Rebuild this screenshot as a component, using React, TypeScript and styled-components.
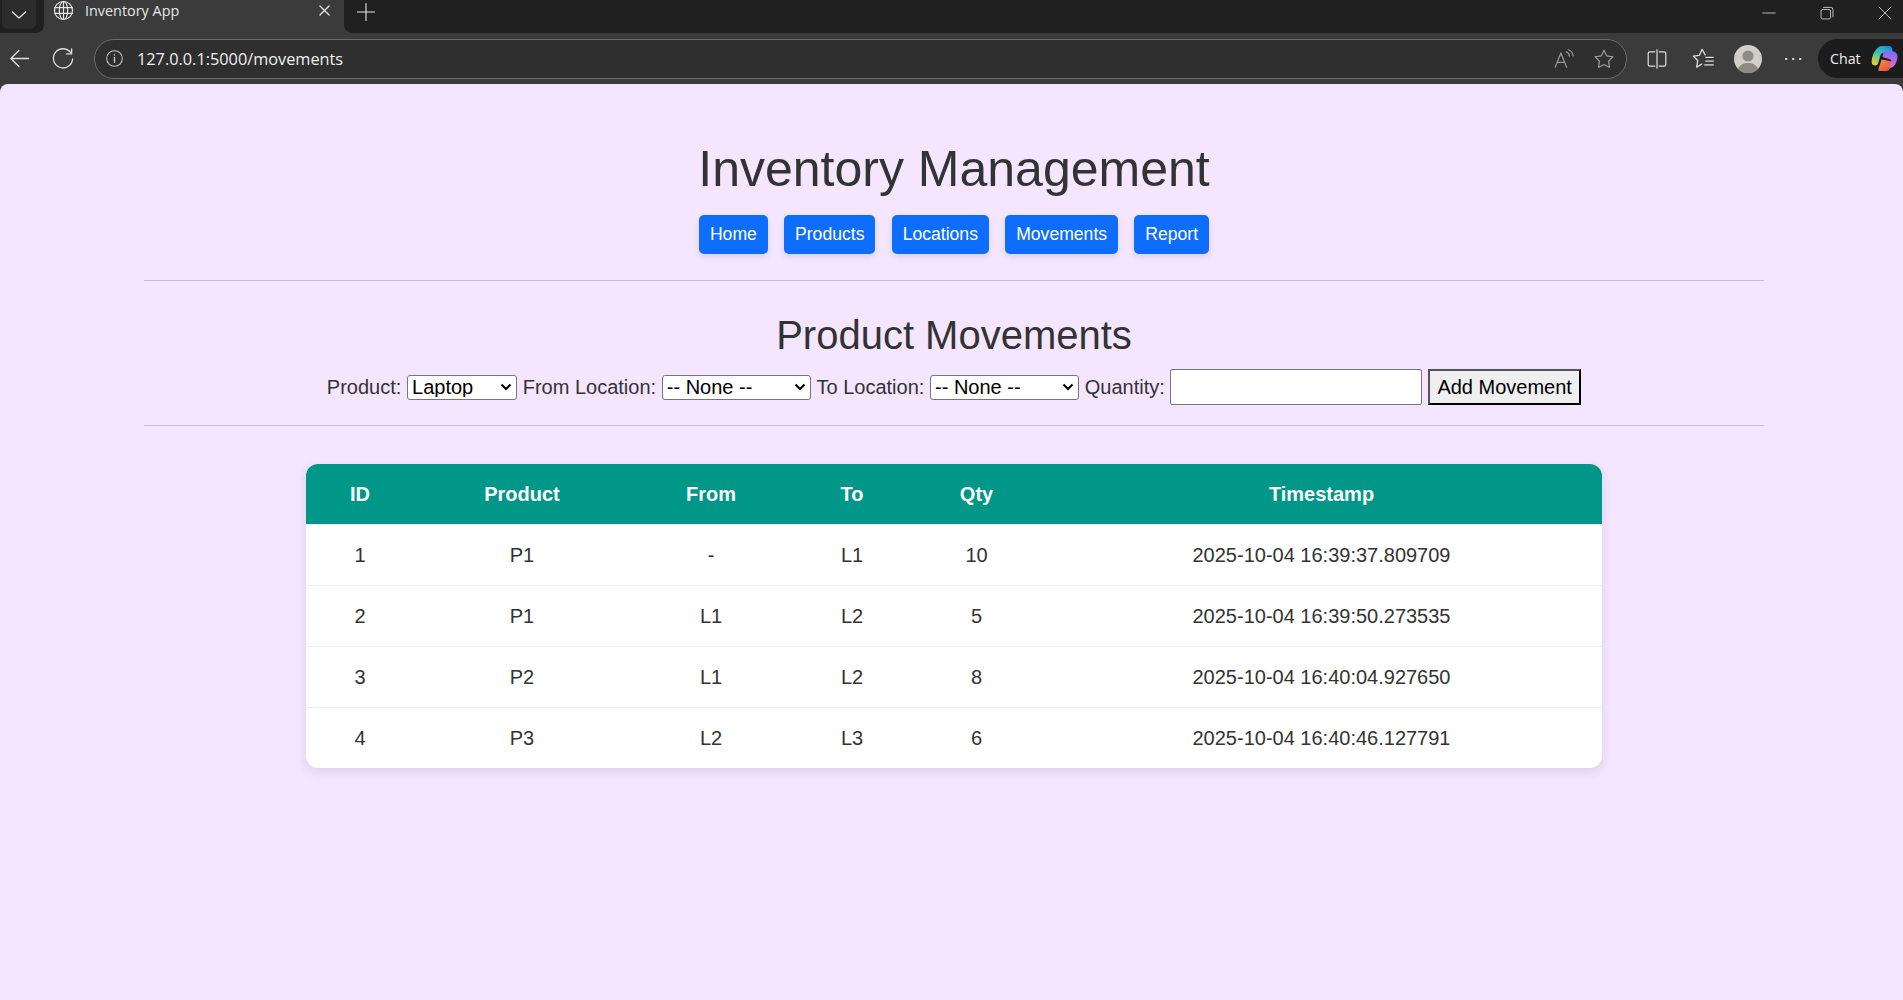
import { ReactNode } from "react";
import styled, { createGlobalStyle } from "styled-components";

const CHEVRON =
    "data:image/svg+xml,%3Csvg xmlns='http://www.w3.org/2000/svg' width='12' height='8' viewBox='0 0 12 8'%3E%3Cpath d='M1.5 1.5 6 6l4.5-4.5' fill='none' stroke='%23000' stroke-width='2'/%3E%3C/svg%3E";

const GlobalStyle = createGlobalStyle`
    html, body {
        margin: 0;
        padding: 0;
        background-color: #3b3b3b;
    }
    body {
        font-family: "Liberation Sans", Arial, sans-serif;
        color: #333;
    }
`;

const Window = styled.div`
    display: flex;
    flex-direction: column;
    height: 1000px;
    overflow: hidden;
`;

const TitleBar = styled.div`
    display: flex;
    align-items: stretch;
    height: 33px;
    background-color: #3b3b3b;
    font-family: "Open Sans", "Noto Sans", sans-serif;
`;

const TabStrip = styled.div`
    display: flex;
    width: 44px;
    background-color: #202020;
    border-radius: 0 0 8px 0;
    padding: 0 0 4px 2px;
    box-sizing: border-box;
`;

const TabListButton = styled.div`
    display: flex;
    align-items: center;
    justify-content: center;
    width: 34px;
    background-color: #2c2c2c;
    border-radius: 0 0 6px 6px;
    color: #e0e0e0;
`;

const Tab = styled.div`
    display: flex;
    align-items: center;
    width: 300px;
    box-sizing: border-box;
    padding: 0 13px 12px 9px;
    background-color: #3b3b3b;
    color: #e6e6e6;
    font-size: 14.4px;
`;

const TabTitle = styled.span`
    flex: 1;
    margin-left: 11px;
`;

const NewTab = styled.div`
    display: flex;
    align-items: center;
    padding: 0 0 10px 12px;
    flex: 1;
    background-color: #202020;
    border-radius: 0 0 0 8px;
    color: #e6e6e6;
`;

const WindowControls = styled.div`
    display: flex;
    align-items: center;
    gap: 44px;
    padding: 0 11px 8px 0;
    background-color: #202020;
    color: #e6e6e6;
`;

const Toolbar = styled.div`
    display: flex;
    align-items: center;
    height: 51px;
    padding-left: 6px;
    background-color: #3b3b3b;
    color: #ddd;
    font-family: "Open Sans", "Noto Sans", sans-serif;
`;

const ToolButton = styled.div<{ $width: number }>`
    display: flex;
    align-items: center;
    justify-content: center;
    flex: none;
    width: ${({ $width }) => $width}px;
`;

const AddressBar = styled.div`
    display: flex;
    align-items: center;
    flex: 1;
    height: 38px;
    margin-right: 7px;
    padding: 0 7px 0 9.5px;
    border: 1px solid #6b6b6b;
    border-radius: 20px;
    background-color: #2f2f2f;
`;

const SiteInfo = styled.span`
    display: flex;
    color: #c4c4c4;
`;

const Url = styled.span`
    flex: 1;
    margin-left: 13.5px;
    color: #f0f0f0;
    font-size: 16.3px;
`;

const AddressIcons = styled.div`
    display: flex;
    align-items: center;
    gap: 18px;
    margin-right: 4px;
    color: #9a9a9a;
`;

const ChatPill = styled.div`
    display: flex;
    align-items: center;
    flex: none;
    gap: 10px;
    width: 85px;
    height: 39px;
    margin-left: 3px;
    padding-left: 12px;
    box-sizing: border-box;
    border-radius: 20px 0 0 20px;
    background-color: #1c1c1c;
    color: #eee;
    font-size: 14.2px;
`;

const Page = styled.main`
    flex: 1;
    padding: 56px 139px 0 144px;
    border-radius: 8px 8px 0 0;
    background-color: #f4e6ff;
`;

const Title = styled.h1`
    margin: 0 0 17px;
    color: #333;
    font-size: 50px;
    font-weight: 400;
    text-align: center;
`;

const Nav = styled.nav`
    display: flex;
    justify-content: center;
    gap: 16.2px;
`;

const NavLink = styled.a`
    padding: 9px 11px;
    border-radius: 5px;
    background-color: #0d6efd;
    box-shadow: 0 3px 6px rgba(0, 0, 0, 0.1);
    color: #fff;
    font-size: 17.6px;
    line-height: 21px;
    text-decoration: none;
`;

const Rule = styled.hr<{ $top: number }>`
    height: 1px;
    margin: ${({ $top }) => $top}px 0 0;
    border: 0;
    background-color: #c8bdd3;
`;

const Heading = styled.h2`
    margin: 31px 0 11px;
    color: #333;
    font-size: 40px;
    font-weight: 400;
    line-height: 46px;
    text-align: center;
`;

const MovementForm = styled.form`
    display: flex;
    align-items: center;
    justify-content: center;
    gap: 5.7px;
    height: 36px;
    font-size: 20px;
`;

const Select = styled.select<{ $width: number }>`
    appearance: none;
    width: ${({ $width }) => $width}px;
    height: 25px;
    box-sizing: border-box;
    padding: 0 0 2px 4px;
    border: 1px solid #767676;
    border-radius: 3px;
    background: #fff url("${CHEVRON}") no-repeat right 4px center;
    color: #000;
    font-family: "Liberation Sans", Arial, sans-serif;
    font-size: 20px;
`;

const QuantityInput = styled.input`
    width: 252px;
    height: 36px;
    box-sizing: border-box;
    border: 1px solid #767676;
    border-radius: 2px;
    background-color: #fff;
    font-size: 20px;
`;

const SubmitButton = styled.button`
    width: 153px;
    height: 36px;
    padding: 0;
    border-style: solid;
    border-width: 2px;
    border-color: #555 #000 #000 #555;
    background-color: #efefef;
    color: #000;
    font-family: "Liberation Sans", Arial, sans-serif;
    font-size: 20px;
`;

const MovementTable = styled.table`
    width: 1296px;
    margin: 38px auto 0;
    border-collapse: separate;
    border-spacing: 0;
    table-layout: fixed;
    overflow: hidden;
    border-radius: 12px;
    background-color: #fff;
    box-shadow: 0 4px 12px rgba(0, 0, 0, 0.1);
    font-size: 20px;
`;

const HeadCell = styled.th`
    height: 60px;
    padding: 0;
    background-color: #009688;
    color: #fff;
    font-weight: 700;
`;

const BodyCell = styled.td`
    height: 60px;
    padding: 0;
    border-top: 1px solid #eee;
    color: #333;
    text-align: center;
`;

const COLUMNS = [
    { label: "ID", width: 108 },
    { label: "Product", width: 216 },
    { label: "From", width: 162 },
    { label: "To", width: 120 },
    { label: "Qty", width: 129 },
    { label: "Timestamp", width: 561 },
];

const MOVEMENTS = [
    ["1", "P1", "-", "L1", "10", "2025-10-04 16:39:37.809709"],
    ["2", "P1", "L1", "L2", "5", "2025-10-04 16:39:50.273535"],
    ["3", "P2", "L1", "L2", "8", "2025-10-04 16:40:04.927650"],
    ["4", "P3", "L2", "L3", "6", "2025-10-04 16:40:46.127791"],
];

const NAV_LINKS = ["Home", "Products", "Locations", "Movements", "Report"];

const Icon = ({ size, children }: { size: number; children: ReactNode }) => (
    <svg
        width={size}
        height={size}
        viewBox="0 0 20 20"
        fill="none"
        stroke="currentColor"
        strokeWidth={1.1}
        strokeLinecap="round"
        strokeLinejoin="round"
    >
        {children}
    </svg>
);

const CopilotLogo = () => (
    <svg width="27" height="27" viewBox="0 0 28 28">
        <defs>
            <linearGradient id="copilotLeft" x1="0.7" y1="0" x2="0.2" y2="1">
                <stop offset="0" stopColor="#1f8fe8" />
                <stop offset="0.5" stopColor="#45c8a0" />
                <stop offset="1" stopColor="#f2cc30" />
            </linearGradient>
            <linearGradient id="copilotRight" x1="0.6" y1="0" x2="0.3" y2="1">
                <stop offset="0" stopColor="#7a6cf0" />
                <stop offset="0.55" stopColor="#b568e6" />
                <stop offset="1" stopColor="#f07ab0" />
            </linearGradient>
            <linearGradient id="copilotBottom" x1="0" y1="0" x2="1" y2="1">
                <stop offset="0" stopColor="#f5962a" />
                <stop offset="1" stopColor="#e8405a" />
            </linearGradient>
        </defs>
        <path
            d="M8 27h8c1.8 0 3-1 3.6-2.6L22 17l-11-2-3 9c-.4 1.2-.4 2 0 3Z"
            fill="url(#copilotBottom)"
        />
        <path
            d="M11 1h7.5c1.6 0 2.6.8 3 2.2L23 8H13c-1.6 0-2.6 1-3 2.4L7.4 19c-.5 1.5-1.4 2.2-2.8 2.2C2 21.2.4 19.4.6 17 1 12 3 7 6 4 7.4 2.4 9 1 11 1Z"
            fill="url(#copilotLeft)"
        />
        <path
            d="M13.5 6.8h8.7c3 0 5.3 2 5.3 5 0 4.2-2 8.800-5.200 11-1 .7-2 1-3 1l1.600-6c.4-1.500 0-2.600-1.400-3l-7.600-2.300.8-3.300c.2-1.200.4-2 .8-2.400Z"
            fill="url(#copilotRight)"
        />
    </svg>
);

const App = () => {
    return (
        <Window>
            <GlobalStyle />
            <TitleBar>
                <TabStrip>
                    <TabListButton>
                        <Icon size={24}>
                            <path d="M4.5 7.5 10 12.5 15.5 7.5" />
                        </Icon>
                    </TabListButton>
                </TabStrip>
                <Tab>
                    <Icon size={21}>
                        <circle cx="10" cy="10" r="8.6" />
                        <ellipse cx="10" cy="10" rx="4" ry="8.6" />
                        <path d="M1.6 7.2h16.8M1.6 12.8h16.8M10 1.4v17.2" />
                    </Icon>
                    <TabTitle>Inventory App</TabTitle>
                    <Icon size={13}>
                        <path d="M3 3l14 14M17 3 3 17" strokeWidth={2} />
                    </Icon>
                </Tab>
                <NewTab>
                    <Icon size={20}>
                        <path d="M10 1.5v17M1.5 10h17" />
                    </Icon>
                </NewTab>
                <WindowControls>
                    <Icon size={14}>
                        <path d="M1 10h18" />
                    </Icon>
                    <Icon size={14}>
                        <rect x="1.5" y="5" width="13.5" height="13.5" rx="2" />
                        <path d="M5 2h10.5a3 3 0 0 1 3 3v10.5" />
                    </Icon>
                    <Icon size={14}>
                        <path d="M1.5 1.5l17 17M18.5 1.5l-17 17" />
                    </Icon>
                </WindowControls>
            </TitleBar>
            <Toolbar>
                <ToolButton $width={26}>
                    <Icon size={23}>
                        <path d="M18 10H2.5M9.5 3 2.5 10l7 7" />
                    </Icon>
                </ToolButton>
                <ToolButton $width={62}>
                    <Icon size={24}>
                        <path d="M16.8 5.2A8 8 0 1 0 18 10" />
                        <path d="M17.2 1.6v4.2h-4.2" />
                    </Icon>
                </ToolButton>
                <AddressBar>
                    <SiteInfo>
                        <Icon size={19}>
                            <circle cx="10" cy="10" r="8.2" />
                            <path d="M10 9v5M10 6v.4" strokeWidth={1.5} />
                        </Icon>
                    </SiteInfo>
                    <Url>127.0.0.1:5000/movements</Url>
                    <AddressIcons>
                        <Icon size={22}>
                            <path d="M2 17.5 7.2 4.5l5.2 13M4 13h6.4" />
                            <path d="M12 3.5c1.6.5 2.8 2 3 3.8M14 1.6c2.4.8 4 3 4.3 5.6" />
                        </Icon>
                        <Icon size={22}>
                            <path d="M10 2l2.5 5.2 5.6.8-4 4 .9 5.7L10 15l-5 2.7.9-5.7-4-4 5.6-.8Z" />
                        </Icon>
                    </AddressIcons>
                </AddressBar>
                <ToolButton $width={46}>
                    <Icon size={22}>
                        <path d="M8 3.5H3.5A1.5 1.5 0 0 0 2 5v10a1.5 1.5 0 0 0 1.5 1.5H8M12 3.5h4.5A1.5 1.5 0 0 1 18 5v10a1.5 1.5 0 0 1-1.5 1.5H12M10 1.5v17" />
                    </Icon>
                </ToolButton>
                <ToolButton $width={46}>
                    <Icon size={23}>
                        <path d="M11.5 6.8 8.8 2 6.4 7.2 1.2 8 5 11.7l-1 5.800 4.500-2.600" />
                        <path d="M12 9h6.5M12 12.300h6.500M11 15.600h7.500" />
                    </Icon>
                </ToolButton>
                <ToolButton $width={44}>
                    <svg width="28" height="28" viewBox="0 0 28 28">
                        <circle cx="14" cy="14" r="14" fill="#d0cec9" />
                        <circle cx="14" cy="11" r="5.6" fill="#8e8b87" />
                        <path d="M4 24c1.8-4.4 5.600-6 10-6s8.200 1.600 10 6a14 14 0 0 1-20 0Z" fill="#8e8b87" />
                    </svg>
                </ToolButton>
                <ToolButton $width={45}>
                    <Icon size={20}>
                        <path d="M3 10h.4M10 10h.4M17 10h.4" strokeWidth={2.2} />
                    </Icon>
                </ToolButton>
                <ChatPill>
                    Chat
                    <CopilotLogo />
                </ChatPill>
            </Toolbar>
            <Page>
                <Title>Inventory Management</Title>
                <Nav>
                    {NAV_LINKS.map((link) => (
                        <NavLink key={link} href="#">
                            {link}
                        </NavLink>
                    ))}
                </Nav>
                <Rule $top={26} />
                <Heading>Product Movements</Heading>
                <MovementForm>
                    <label htmlFor="product">Product:</label>
                    <Select id="product" $width={110}>
                        <option>Laptop</option>
                    </Select>
                    <label htmlFor="from">From Location:</label>
                    <Select id="from" $width={149}>
                        <option>-- None --</option>
                    </Select>
                    <label htmlFor="to">To Location:</label>
                    <Select id="to" $width={149}>
                        <option>-- None --</option>
                    </Select>
                    <label htmlFor="quantity">Quantity:</label>
                    <QuantityInput id="quantity" type="number" />
                    <SubmitButton type="button">Add Movement</SubmitButton>
                </MovementForm>
                <Rule $top={20} />
                <MovementTable>
                    <colgroup>
                        {COLUMNS.map((column) => (
                            <col key={column.label} width={column.width} />
                        ))}
                    </colgroup>
                    <thead>
                        <tr>
                            {COLUMNS.map((column) => (
                                <HeadCell key={column.label}>{column.label}</HeadCell>
                            ))}
                        </tr>
                    </thead>
                    <tbody>
                        {MOVEMENTS.map((row) => (
                            <tr key={row[0]}>
                                {row.map((value, index) => (
                                    <BodyCell key={index}>{value}</BodyCell>
                                ))}
                            </tr>
                        ))}
                    </tbody>
                </MovementTable>
            </Page>
        </Window>
    );
};

export default App;
